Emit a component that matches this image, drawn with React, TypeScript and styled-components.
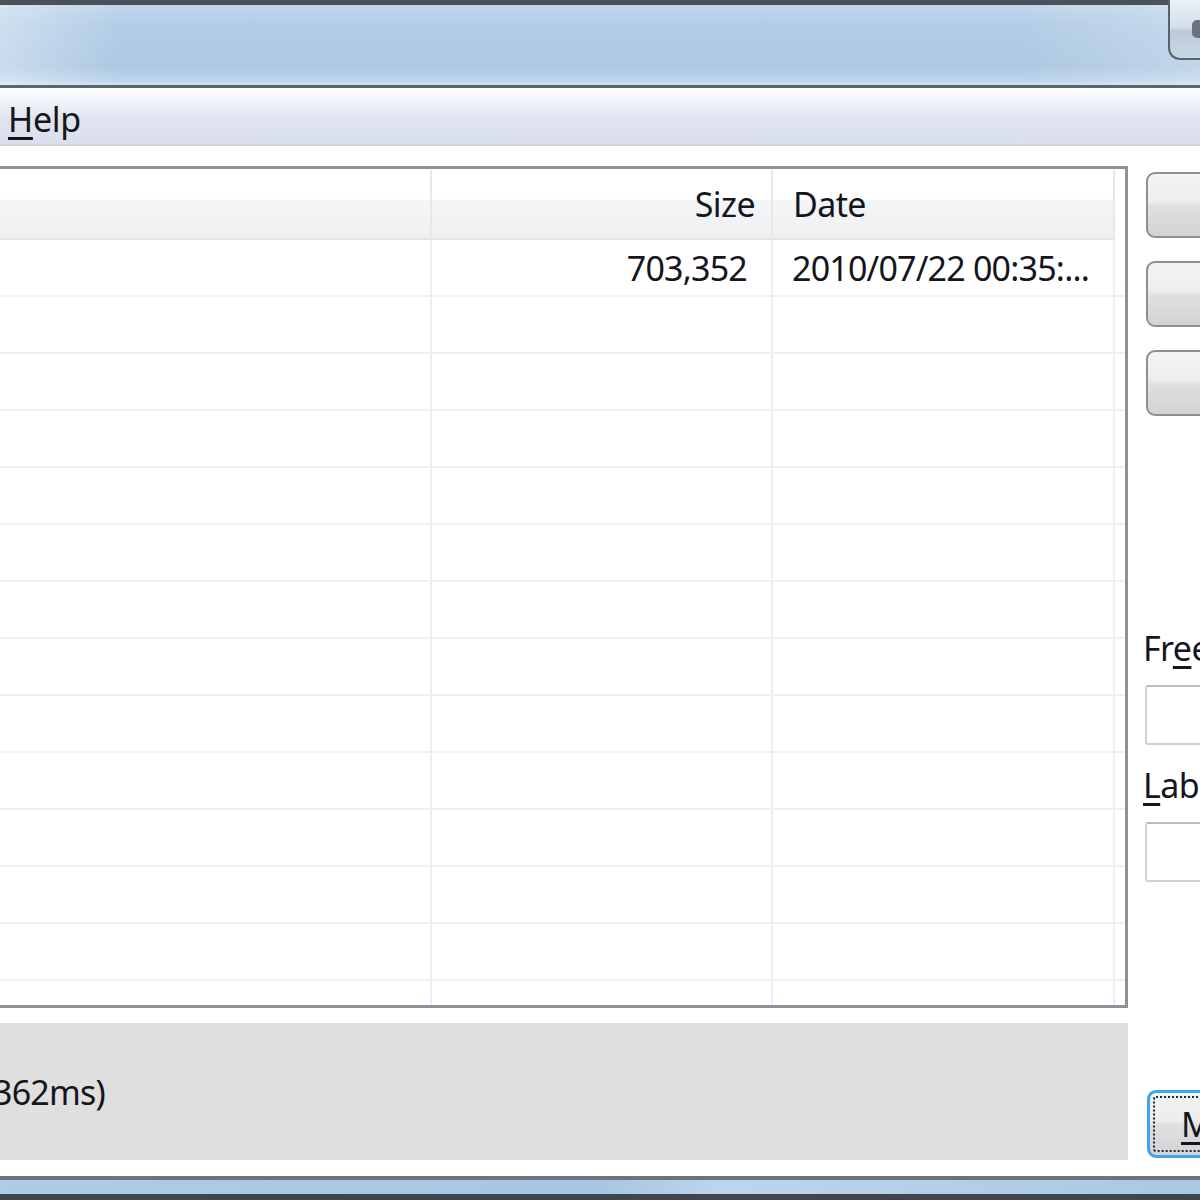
import React from 'react';
import styled, { createGlobalStyle } from 'styled-components';

const GlobalStyle = createGlobalStyle`
  html, body {
    margin: 0;
    padding: 0;
    width: 1200px;
    height: 1200px;
    overflow: hidden;
    background: #ffffff;
  }
  body {
    font-family: "Noto Sans", "Open Sans", sans-serif;
    color: #1e1e1e;
  }
`;

const Window = styled.div`
  display: flex;
  flex-direction: column;
  width: 1200px;
  height: 1200px;
  overflow: hidden;
`;

// aero glass caption area
const TitleBar = styled.div`
  display: flex;
  justify-content: flex-end;
  align-items: flex-start;
  height: 85px;
  border-bottom: 3px solid #5c646e;
  background:
    linear-gradient(90deg, rgba(255, 255, 255, 0.35) 0%, rgba(255, 255, 255, 0) 10%, rgba(255, 255, 255, 0) 85%, rgba(255, 255, 255, 0.25) 100%),
    linear-gradient(180deg, #c3d8ec 0%, #b3cde6 30%, #adc8e2 80%, #c0d6ec 96%, #d4e3f2 100%);
  box-shadow: inset 0 5px 0 #4a5159;
`;

const CaptionButton = styled.div`
  display: flex;
  align-items: center;
  width: 32px;
  height: 60px;
  border: 2px solid #58616c;
  border-top: none;
  border-right: none;
  border-radius: 0 0 0 12px;
  background: linear-gradient(180deg, #e9f0f7 0%, #d3dfeb 48%, #bccbdb 52%, #c8d6e4 100%);
  padding-left: 22px;
  box-sizing: border-box;
`;

const CaptionGlyph = styled.span`
  width: 10px;
  height: 18px;
  border-radius: 5px 0 0 5px;
  background: #6a727c;
`;

const MenuBar = styled.div`
  display: flex;
  align-items: center;
  height: 56px;
  padding-left: 8px;
  border-bottom: 2px solid #cfd3dd;
  background: linear-gradient(180deg, #fcfdfe 0%, #f1f3f9 25%, #e0e4f1 55%, #dadfee 100%);
`;

const MenuItem = styled.span`
  font-size: 34px;
  letter-spacing: -0.3px;
  color: #161616;
  margin-top: 6px;
`;

const AccessKey = styled.span`
  text-decoration: underline;
  text-decoration-thickness: 3px;
  text-underline-offset: 5px;
`;

const Content = styled.div`
  flex: 1;
  display: flex;
  gap: 15px;
  padding: 20px 0 16px;
  background: #ffffff;
`;

const LeftColumn = styled.div`
  display: flex;
  flex-direction: column;
  gap: 15px;
  width: 1128px;
  flex-shrink: 0;
`;

const ListView = styled.div`
  height: 842px;
  box-sizing: border-box;
  border: 3px solid #8c9299;
  border-left: none;
  background: #ffffff;
  overflow: hidden;
  padding-top: 1px;
`;

const Grid = styled.div`
  display: grid;
  grid-template-columns: 432px 341px 342px 1fr;
  grid-template-rows: 70px;
  grid-auto-rows: 57px;
`;

const HeaderCell = styled.div<{ align?: 'left' | 'right'; last?: boolean }>`
  display: flex;
  align-items: center;
  justify-content: ${(p) => (p.align === 'right' ? 'flex-end' : 'flex-start')};
  padding: 0 ${(p) => (p.align === 'right' ? '16px' : '0')} 0 ${(p) => (p.align === 'left' ? '20px' : '0')};
  box-sizing: border-box;
  font-size: 34px;
  letter-spacing: -0.6px;
  color: #15151f;
  background: ${(p) =>
    p.last ? '#ffffff' : 'linear-gradient(180deg, #ffffff 0%, #ffffff 42%, #f4f5f7 46%, #eff0f2 100%)'};
  border-right: ${(p) => (p.last ? 'none' : '2px solid #e6e8eb')};
  border-bottom: ${(p) => (p.last ? 'none' : '2px solid #e2e4e8')};
`;

const HeaderRow = styled.div`
  display: contents;
`;

const Cell = styled.div<{ align?: 'left' | 'right'; last?: boolean }>`
  display: flex;
  align-items: center;
  justify-content: ${(p) => (p.align === 'right' ? 'flex-end' : 'flex-start')};
  padding: 0 ${(p) => (p.align === 'right' ? '24px' : '0')} 0 ${(p) => (p.align === 'left' ? '19px' : '0')};
  box-sizing: border-box;
  font-size: 34px;
  letter-spacing: -0.8px;
  color: #15151c;
  border-right: ${(p) => (p.last ? 'none' : '2.5px solid #e9eef7')};
  border-bottom: 2px solid #eef0f3;
  white-space: nowrap;
  overflow: hidden;
`;

const StatusBox = styled.div`
  flex: 1;
  display: flex;
  align-items: center;
  background: #dfdfdf;
  font-size: 34px;
  letter-spacing: -0.8px;
  color: #15151c;
  text-indent: -7px;
`;

const RightColumn = styled.div`
  display: flex;
  flex-direction: column;
  width: 200px;
  flex-shrink: 0;
  padding-top: 6px;
`;

const PushButton = styled.div<{ isDefault?: boolean }>`
  display: flex;
  align-items: center;
  width: 180px;
  height: ${(p) => (p.isDefault ? '68px' : '66px')};
  margin-left: ${(p) => (p.isDefault ? '4px' : '3px')};
  margin-bottom: ${(p) => (p.isDefault ? '2px' : '23px')};
  box-sizing: border-box;
  border: ${(p) => (p.isDefault ? '3px solid #3ea6e6' : '2.5px solid #8b9097')};
  border-radius: 9px;
  background: linear-gradient(180deg, #f4f4f4 0%, #ededed 45%, #dfdfdf 52%, #d3d3d3 100%);
  font-size: 34px;
  color: #15151c;
  padding: 3px;
`;

const FocusRect = styled.div`
  flex: 1;
  align-self: stretch;
  display: flex;
  align-items: center;
  padding-left: 26px;
  border: 2px dotted #1a2a40;
  border-radius: 3px;
`;

const FieldLabel = styled.div<{ first?: boolean }>`
  font-size: 34px;
  letter-spacing: -0.6px;
  color: #15151f;
  margin-top: ${(p) => (p.first ? '182px' : '13px')};
  line-height: 54px;
`;

const TextField = styled.div`
  height: 60px;
  margin-left: 2px;
  margin-top: 10px;
  box-sizing: border-box;
  border: 2px solid #cdd1d6;
  border-top-color: #b9bec5;
  border-radius: 3px;
  background: #ffffff;
`;

const Spacer = styled.div`
  flex: 1;
`;

const BottomFrame = styled.div`
  height: 14px;
  border-top: 4px solid #6c737d;
  border-bottom: 6px solid #3f464f;
  background: linear-gradient(90deg, #b0cbe5 0%, #a9c5e1 50%, #bdd5ec 60%, #abc7e2 100%);
`;

const rows: { size: string; date: string }[] = [
  { size: '703,352', date: '2010/07/22 00:35:...' },
  ...Array.from({ length: 13 }, () => ({ size: '', date: '' })),
];

export default function App() {
  return (
    <>
      <GlobalStyle />
      <Window>
        <TitleBar>
          <CaptionButton>
            <CaptionGlyph />
          </CaptionButton>
        </TitleBar>
        <MenuBar>
          <MenuItem>
            <AccessKey>H</AccessKey>elp
          </MenuItem>
        </MenuBar>
        <Content>
          <LeftColumn>
            <ListView>
              <Grid>
                <HeaderRow>
                  <HeaderCell />
                  <HeaderCell align="right">Size</HeaderCell>
                  <HeaderCell align="left">Date</HeaderCell>
                  <HeaderCell last />
                </HeaderRow>
                {rows.map((r, i) => (
                  <React.Fragment key={i}>
                    <Cell />
                    <Cell align="right">{r.size}</Cell>
                    <Cell align="left">{r.date}</Cell>
                    <Cell last />
                  </React.Fragment>
                ))}
              </Grid>
            </ListView>
            <StatusBox>362ms)</StatusBox>
          </LeftColumn>
          <RightColumn>
            <PushButton />
            <PushButton />
            <PushButton />
            <FieldLabel first>
              Fr<AccessKey>e</AccessKey>e space
            </FieldLabel>
            <TextField />
            <FieldLabel>
              <AccessKey>L</AccessKey>abel
            </FieldLabel>
            <TextField />
            <Spacer />
            <PushButton isDefault>
              <FocusRect>
                <AccessKey>M</AccessKey>ake
              </FocusRect>
            </PushButton>
          </RightColumn>
        </Content>
        <BottomFrame />
      </Window>
    </>
  );
}
